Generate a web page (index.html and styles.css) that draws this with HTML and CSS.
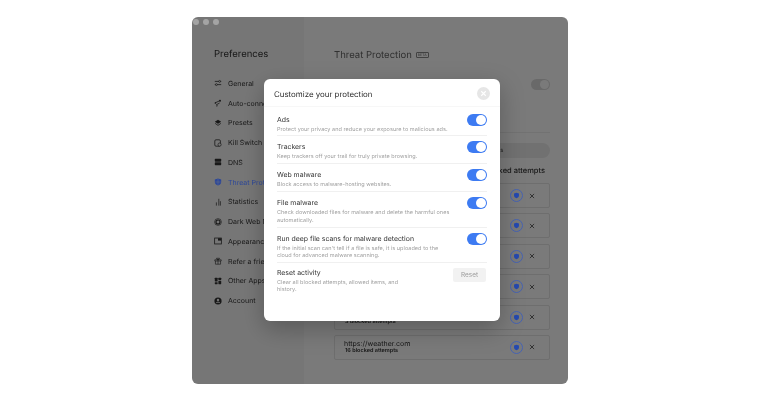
FILE: index.html
```html
<!DOCTYPE html>
<html lang="en">
<head>
    <meta charset="UTF-8">
    <title>Preferences - Threat Protection</title>
    <link rel="stylesheet" href="styles.css">
</head>
<body>
    <div class="window">
        <aside class="sidebar">
            <div class="dots"><span></span><span></span><span></span></div>
            <h2 class="side-title">Preferences</h2>
            <nav class="nav">
                <div class="nav-item">
                    <svg viewBox="0 0 10 10"><path d="M1 3h5M8 3h1M1 7h1M4 7h5" stroke="currentColor" fill="none"/><circle cx="7" cy="3" r="1.2" fill="none" stroke="currentColor" stroke-width=".8"/><circle cx="3" cy="7" r="1.2" fill="none" stroke="currentColor" stroke-width=".8"/></svg>
                    <span>General</span>
                </div>
                <div class="nav-item">
                    <svg viewBox="0 0 10 10"><path d="M1 5l5.500-2.500M2.500 7.500L7 5" stroke="currentColor" fill="none"/><circle cx="7.500" cy="2.200" r="1.300" fill="currentColor"/><circle cx="1.800" cy="5" r=".9" fill="currentColor"/><path d="M4 7.500L3.500 9.500" stroke="currentColor"/></svg>
                    <span>Auto-connect</span>
                </div>
                <div class="nav-item">
                    <svg viewBox="0 0 10 10"><path d="M5 1l4 2.500L5 6 1 3.500z" fill="currentColor"/><path d="M1.500 5.500L5 8l3.500-2.500" fill="none" stroke="currentColor"/></svg>
                    <span>Presets</span>
                </div>
                <div class="nav-item">
                    <svg viewBox="0 0 10 10"><rect x="1" y="1" width="7" height="8" rx="1.500" fill="none" stroke="currentColor"/><circle cx="7" cy="7" r="2" fill="#f4f4f4" stroke="currentColor" stroke-width=".8"/></svg>
                    <span>Kill Switch</span>
                </div>
                <div class="nav-item">
                    <svg viewBox="0 0 10 10"><rect x="1" y="1" width="8" height="3.600" rx=".8" fill="currentColor"/><rect x="1" y="5.400" width="8" height="3.600" rx=".8" fill="currentColor"/></svg>
                    <span>DNS</span>
                </div>
                <div class="nav-item active">
                    <svg viewBox="0 0 10 10"><path d="M5 .6l4 1.400V5c0 2.300-1.800 3.700-4 4.400C2.800 8.700 1 7.300 1 5V2z" fill="currentColor"/><path d="M5 1v8M1.500 5h7" stroke="#7a7a7a" stroke-width=".5" fill="none"/></svg>
                    <span>Threat Protection</span>
                </div>
                <div class="nav-item">
                    <svg viewBox="0 0 10 10"><path d="M3 9.500V5.500M6 9.500V1M8 9.500V4" stroke="currentColor" stroke-width=".9" fill="none"/></svg>
                    <span>Statistics</span>
                </div>
                <div class="nav-item">
                    <svg viewBox="0 0 10 10"><circle cx="5" cy="5" r="4.200" fill="none" stroke="currentColor" stroke-width=".8"/><circle cx="5" cy="5" r="2.500" fill="none" stroke="currentColor" stroke-width="1.400"/></svg>
                    <span>Dark Web Monitor</span>
                </div>
                <div class="nav-item">
                    <svg viewBox="0 0 10 10"><rect x=".8" y="1.300" width="8.400" height="7.400" fill="none" stroke="currentColor"/><rect x="5" y="1.500" width="4" height="3" fill="currentColor"/></svg>
                    <span>Appearance</span>
                </div>
                <div class="nav-item">
                    <svg viewBox="0 0 10 10"><path d="M1 3.500h8v1.500H1zM1.800 5v4h6.400V5M5 3.500V9M5 3.500C3 3.500 2.500 1 4 1.200c.6 0 1 1.300 1 2.300 0-1 .4-2.300 1-2.300 1.500-.2 1 2.300-1 2.300" fill="none" stroke="currentColor" stroke-width=".8"/></svg>
                    <span>Refer a friend</span>
                </div>
                <div class="nav-item">
                    <svg viewBox="0 0 10 10"><rect x="1" y="1" width="3.500" height="4.500" rx=".5" fill="currentColor"/><rect x="5.500" y="1" width="3.500" height="3" rx=".5" fill="currentColor"/><rect x="1" y="6.500" width="3.500" height="2.500" rx=".5" fill="currentColor"/><rect x="5.500" y="5" width="3.500" height="4" rx=".5" fill="currentColor"/></svg>
                    <span>Other Apps</span>
                </div>
                <div class="nav-item">
                    <svg viewBox="0 0 10 10"><circle cx="5" cy="5" r="4.500" fill="currentColor"/><circle cx="5" cy="3.800" r="1.500" fill="#f4f4f4"/><path d="M2.300 7.800C3 6 7 6 7.700 7.800" stroke="#f4f4f4" stroke-width="1.200" fill="none"/></svg>
                    <span>Account</span>
                </div>
            </nav>
        </aside>

        <main class="content">
            <div class="content-head">
                <h2 class="content-title">Threat Protection</h2>
                <span class="beta">BETA</span>
            </div>
            <div class="enable-row"><span class="mini-toggle"></span></div>
            <div class="content-line"></div>
            <div class="stats-pill">Allowed websites</div>
            <div class="list-title">Top websites by blocked attempts</div>
            <div class="site-list">
                <div class="site-row">
                    <div class="site-text"></div>
                    <span class="shield-btn"><svg viewBox="0 0 10 10"><path d="M5 1l3.500 1.200V5c0 2-1.500 3.300-3.500 4C3 8.300 1.500 7 1.500 5V2.200z"/></svg></span>
                    <span class="row-x"><svg viewBox="0 0 10 10"><path d="M1.500 1.500l7 7M8.500 1.500l-7 7"/></svg></span>
                </div>
                <div class="site-row">
                    <div class="site-text"></div>
                    <span class="shield-btn"><svg viewBox="0 0 10 10"><path d="M5 1l3.500 1.200V5c0 2-1.500 3.300-3.500 4C3 8.300 1.500 7 1.500 5V2.200z"/></svg></span>
                    <span class="row-x"><svg viewBox="0 0 10 10"><path d="M1.500 1.500l7 7M8.500 1.500l-7 7"/></svg></span>
                </div>
                <div class="site-row">
                    <div class="site-text"></div>
                    <span class="shield-btn"><svg viewBox="0 0 10 10"><path d="M5 1l3.500 1.200V5c0 2-1.500 3.300-3.500 4C3 8.300 1.500 7 1.500 5V2.200z"/></svg></span>
                    <span class="row-x"><svg viewBox="0 0 10 10"><path d="M1.500 1.500l7 7M8.500 1.500l-7 7"/></svg></span>
                </div>
                <div class="site-row">
                    <div class="site-text"></div>
                    <span class="shield-btn"><svg viewBox="0 0 10 10"><path d="M5 1l3.500 1.200V5c0 2-1.500 3.300-3.500 4C3 8.300 1.500 7 1.500 5V2.200z"/></svg></span>
                    <span class="row-x"><svg viewBox="0 0 10 10"><path d="M1.500 1.500l7 7M8.500 1.500l-7 7"/></svg></span>
                </div>
                <div class="site-row">
                    <div class="site-text bottom"><div class="site-count">3 blocked attempts</div></div>
                    <span class="shield-btn"><svg viewBox="0 0 10 10"><path d="M5 1l3.500 1.200V5c0 2-1.500 3.300-3.500 4C3 8.300 1.500 7 1.500 5V2.200z"/></svg></span>
                    <span class="row-x"><svg viewBox="0 0 10 10"><path d="M1.500 1.500l7 7M8.500 1.500l-7 7"/></svg></span>
                </div>
                <div class="site-row">
                    <div class="site-text">
                        <div class="site-url">https://weather.com</div>
                        <div class="site-count">16 blocked attempts</div>
                    </div>
                    <span class="shield-btn"><svg viewBox="0 0 10 10"><path d="M5 1l3.500 1.200V5c0 2-1.500 3.300-3.500 4C3 8.300 1.500 7 1.500 5V2.200z"/></svg></span>
                    <span class="row-x"><svg viewBox="0 0 10 10"><path d="M1.500 1.500l7 7M8.500 1.500l-7 7"/></svg></span>
                </div>
            </div>
        </main>

        <div class="dim"></div>

        <div class="modal">
            <div class="modal-head">
                <h3>Customize your protection</h3>
                <span class="close-btn">
                    <svg viewBox="0 0 10 10"><path d="M2.500 2.500l5 5M7.500 2.500l-5 5" stroke="#fff" stroke-width="1.200"/></svg>
                </span>
            </div>
            <div class="modal-body">
                <div class="opt opt-first">
                    <div class="opt-text">
                        <div class="opt-title">Ads</div>
                        <div class="opt-desc">Protect your privacy and reduce your exposure to malicious ads.</div>
                    </div>
                    <span class="toggle"></span>
                </div>
                <div class="opt">
                    <div class="opt-text">
                        <div class="opt-title">Trackers</div>
                        <div class="opt-desc">Keep trackers off your trail for truly private browsing.</div>
                    </div>
                    <span class="toggle"></span>
                </div>
                <div class="opt">
                    <div class="opt-text">
                        <div class="opt-title">Web malware</div>
                        <div class="opt-desc">Block access to malware-hosting websites.</div>
                    </div>
                    <span class="toggle"></span>
                </div>
                <div class="opt">
                    <div class="opt-text">
                        <div class="opt-title">File malware</div>
                        <div class="opt-desc">Check downloaded files for malware and delete the harmful ones automatically.</div>
                    </div>
                    <span class="toggle"></span>
                </div>
                <div class="opt">
                    <div class="opt-text">
                        <div class="opt-title">Run deep file scans for malware detection</div>
                        <div class="opt-desc">If the initial scan can't tell if a file is safe, it is uploaded to the cloud for advanced malware scanning.</div>
                    </div>
                    <span class="toggle"></span>
                </div>
                <div class="opt opt-last">
                    <div class="opt-text narrow">
                        <div class="opt-title">Reset activity</div>
                        <div class="opt-desc">Clear all blocked attempts, allowed items, and history.</div>
                    </div>
                    <button class="reset-btn">Reset</button>
                </div>
            </div>
        </div>
    </div>
</body>
</html>
```

FILE: styles.css
```css
* {
    margin: 0;
    padding: 0;
    box-sizing: border-box;
}

body {
    font-family: Inter, "Liberation Sans", sans-serif;
    text-rendering: geometricPrecision;
    background: white;
    height: 402px;
    overflow: hidden;
    padding: 17px 192px 0;
}

.window {
    position: relative;
    display: flex;
    width: 376px;
    height: 367px;
    border-radius: 6px;
    overflow: hidden;
    background: #fff;
    will-change: transform;
}

/* backdrop behind the dialog */
.dim {
    position: absolute;
    inset: 0;
    background: rgba(0, 0, 0, 0.52);
}

.sidebar {
    width: 112px;
    background: #f6f6f6;
    padding: 2px 0 0 22px;
    color: #333;
}

.dots {
    display: flex;
    gap: 4px;
    margin-left: -21px;
    position: relative;
    z-index: 1;
}

.dots span {
    width: 6px;
    height: 6px;
    border-radius: 50%;
    background: #a4a4a4;
}

.side-title {
    font-size: 9.500px;
    font-weight: 400;
    line-height: 14px;
    margin-top: 23px;
}

.nav {
    margin-top: 11.500px;
}

.nav-item {
    display: flex;
    align-items: center;
    gap: 6px;
    height: 19.75px;
    font-size: 7px;
    white-space: nowrap;
}

.nav-item svg {
    width: 8px;
    height: 8px;
    flex-shrink: 0;
}

.nav-item.active {
    color: #2c4799;
    position: relative;
    z-index: 1;
}

.content {
    flex: 1;
    background: #fff;
    padding: 30px 18px 0 30px;
    min-width: 0;
}

.content-head {
    display: flex;
    align-items: center;
    gap: 4px;
    height: 16px;
}

.content-title {
    font-size: 9.500px;
    font-weight: 400;
    color: #666;
}

.beta {
    font-size: 3.500px;
    line-height: 4px;
    padding: 0 1px;
    border: 1px solid #888;
    border-radius: 1px;
    color: #666;
}

.enable-row {
    display: flex;
    justify-content: flex-end;
    margin-top: 16px;
}

.mini-toggle {
    display: flex;
    justify-content: flex-end;
    width: 19px;
    height: 11px;
    border-radius: 6px;
    background: #dcdcdc;
    padding: 1px;
}

.mini-toggle::after {
    content: "";
    width: 9px;
    height: 9px;
    border-radius: 50%;
    background: #fff;
}

.content-line {
    height: 1px;
    background: #eee;
    margin-top: 42px;
}

.stats-pill {
    height: 15px;
    margin-top: 10px;
    border-radius: 8px;
    background: #ececec;
    font-size: 6px;
    line-height: 15px;
    color: #555;
    padding-left: 120px;
}

.list-title {
    font-size: 7.500px;
    font-weight: 500;
    line-height: 10px;
    margin-top: 8px;
    padding-right: 5px;
    color: #333;
    text-align: right;
    white-space: nowrap;
}

.site-list {
    display: flex;
    flex-direction: column;
    gap: 5.4px;
    margin-top: 7px;
}

.site-row {
    display: flex;
    align-items: center;
    height: 25px;
    border: 1px solid #e6e6e6;
    border-radius: 2px;
    padding: 0 14px 0 9px;
    gap: 6px;
}

.site-text {
    flex: 1;
    min-width: 0;
}

.site-text.bottom {
    padding-top: 10px;
}

.site-url {
    font-size: 7px;
    line-height: 9px;
    color: #333;
}

.site-count {
    font-size: 5.500px;
    font-weight: 600;
    line-height: 7px;
    color: #333;
    margin-left: 1px;
}

.shield-btn {
    display: flex;
    align-items: center;
    justify-content: center;
    width: 13px;
    height: 13px;
    border: 1px solid #4663b3;
    border-radius: 50%;
    position: relative;
    z-index: 1;
}

.shield-btn svg {
    width: 7px;
    height: 7px;
    fill: #2449b0;
}

.row-x {
    width: 6px;
    height: 6px;
    margin-left: 0.500px;
}

.row-x svg {
    display: block;
    stroke: #333;
    stroke-width: 1.200;
}

.modal {
    position: absolute;
    z-index: 2;
    left: 72px;
    top: 62px;
    width: 236px;
    height: 242px;
    background: white;
    border-radius: 6px;
    box-shadow: 0 8px 24px rgba(0, 0, 0, 0.25);
}

.modal-head {
    display: flex;
    align-items: center;
    justify-content: space-between;
    height: 28px;
    padding: 2px 10px 0;
    border-bottom: 1px solid #f7f7f7;
}

.modal-head h3 {
    font-size: 7.900px;
    font-weight: 400;
    color: #2b2b2b;
}

.close-btn {
    width: 13px;
    height: 13px;
    border-radius: 50%;
    background: #e6e6e6;
    display: flex;
    align-items: center;
    justify-content: center;
}

.close-btn svg {
    width: 9px;
    height: 9px;
}

.modal-body {
    padding: 0 13px;
}

.opt {
    display: flex;
    justify-content: space-between;
    align-items: flex-start;
    padding: 5px 0 1.500px;
    border-bottom: 1px solid #f0f0f0;
}

.opt-first {
    padding-top: 7px;
    padding-bottom: 0.500px;
}

.opt-last {
    border-bottom: none;
    padding-top: 3.500px;
}

.opt-text {
    width: 175px;
}

.opt-text.narrow {
    width: 135px;
}

.opt-title {
    font-size: 6.900px;
    line-height: 12px;
    color: #333;
    margin-bottom: 1px;
}

.opt-desc {
    font-size: 5.500px;
    letter-spacing: 0.050px;
    line-height: 7.500px;
    color: #a0a0a0;
}

.toggle {
    display: flex;
    justify-content: flex-end;
    width: 20px;
    height: 12px;
    border-radius: 6px;
    background: #3d7bf2;
    padding: 1px;
    flex-shrink: 0;
}

.toggle::after {
    content: "";
    width: 10px;
    height: 10px;
    border-radius: 50%;
    background: white;
}

.reset-btn {
    width: 33px;
    height: 14px;
    margin: 1px 1px 0 0;
    border: none;
    border-radius: 2px;
    background: #f2f2f2;
    color: #9a9a9a;
    font-family: inherit;
    font-size: 6.500px;
}
```
